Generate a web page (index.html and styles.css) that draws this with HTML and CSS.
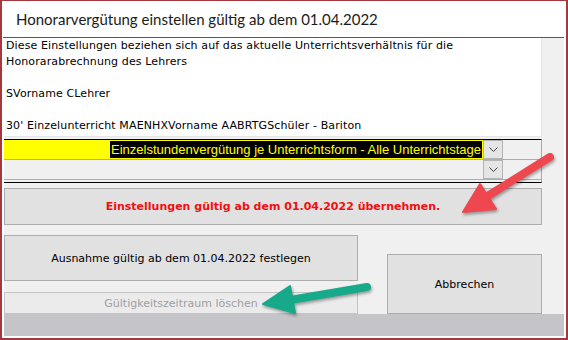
FILE: index.html
```html
<!DOCTYPE html>
<html lang="de">
<head>
  <meta charset="UTF-8">
  <link rel="stylesheet" href="styles.css">
</head>
<body>
  <div class="window">
    <div class="titlebar">Honorarvergütung einstellen gültig ab dem 01.04.2022</div>
    <div class="content">
      <div class="main">
        <div class="info">
          <div>Diese Einstellungen beziehen sich auf das aktuelle Unterrichtsverhältnis für die</div>
          <div>Honorarabrechnung des Lehrers</div>
          <div>&nbsp;</div>
          <div>SVorname CLehrer</div>
          <div>&nbsp;</div>
          <div>30' Einzelunterricht MAENHXVorname AABRTGSchüler - Bariton</div>
        </div>
        <div class="combos">
          <div class="combo-row">
            <div class="combo combo-yellow">
              <div class="combo-field"><span class="combo-value">Einzelstundenvergütung je Unterrichtsform - Alle Unterrichtstage</span></div>
              <div class="drop">
                <svg width="9" height="5" viewBox="0 0 9 5"><polyline points="0.5,0.5 4.5,4.5 8.5,0.5" fill="none" stroke="#444" stroke-width="1"/></svg>
              </div>
            </div>
          </div>
          <div class="combo-row">
            <div class="combo">
              <div class="combo-field combo-empty"></div>
              <div class="drop">
                <svg width="9" height="5" viewBox="0 0 9 5"><polyline points="0.5,0.5 4.5,4.5 8.5,0.5" fill="none" stroke="#444" stroke-width="1"/></svg>
              </div>
            </div>
          </div>
        </div>
        <button class="btn btn-apply">Einstellungen gültig ab dem 01.04.2022 übernehmen.</button>
        <div class="lower">
          <div class="lower-left">
            <button class="btn btn-exception">Ausnahme gültig ab dem 01.04.2022 festlegen</button>
            <button class="btn btn-delete" disabled>Gültigkeitszeitraum löschen</button>
          </div>
          <button class="btn btn-cancel">Abbrechen</button>
        </div>
      </div>
      <div class="side"></div>
    </div>
    <div class="statusbar"></div>

    <svg class="arrows" width="568" height="340" viewBox="0 0 568 340">
      <g class="arrow-red">
        <line x1="550" y1="157" x2="486" y2="197" stroke="#ef474f" stroke-width="8" stroke-linecap="round"/>
        <polygon points="463,212 480,184 496,209" fill="#ef474f" stroke="#ef474f" stroke-width="2" stroke-linejoin="round"/>
      </g>
      <g class="arrow-green">
        <line x1="367" y1="287" x2="290" y2="300" stroke="#16a98a" stroke-width="8" stroke-linecap="round"/>
        <polygon points="263,304 290,286 295,313" fill="#16a98a" stroke="#16a98a" stroke-width="2" stroke-linejoin="round"/>
      </g>
    </svg>
  </div>
</body>
</html>
```

FILE: styles.css
```css
body {
  margin: 0;
  padding: 0;
  background-color: white;
  font-family: "DejaVu Sans", Tahoma, sans-serif;
}

.window {
  position: relative;
  width: 568px;
  height: 340px;
  box-sizing: border-box;
  border: 2px solid #a5383c;
  border-top-width: 1px;
  padding: 0 2px 2px 2px;
  background-color: white;
  display: flex;
  flex-direction: column;
}

.titlebar {
  height: 36px;
  border-bottom: 1px solid #a5383c;
  margin-left: -1px;
  padding-left: 13px;
  display: flex;
  align-items: center;
  font-family: Lato, "Noto Sans", sans-serif;
  font-size: 15px;
  color: #1b1b1b;
}

.content {
  height: 276px;
  display: flex;
  background-color: #f0f0f0;
}

.main {
  width: 538px;
  display: flex;
  flex-direction: column;
}

.side {
  flex-grow: 1;
  background-color: #f0f0f0;
}

.info {
  height: 100px;
  box-sizing: border-box;
  background-color: white;
  border-bottom: 1px solid #e6e6e6;
  border-right: 1px solid #e2e2e2;
  padding-left: 2px;
  font-size: 11px;
  letter-spacing: 0.12px;
  line-height: 16px;
  color: black;
}

.combos {
  margin-top: 2px;
  border-top: 1px solid black;
  border-bottom: 1px solid black;
  border-right: 1px solid #a8a8a8;
  padding-bottom: 2px;
}

.combo-row {
  height: 19px;
  border-bottom: 1px solid #adadad;
}

.combo {
  width: 499px;
  height: 19px;
  display: flex;
}

.combo-field {
  flex-grow: 1;
  display: flex;
  justify-content: flex-end;
  align-items: center;
}

.combo-yellow .combo-field {
  background-color: #ffff00;
}

.combo-value {
  background-color: black;
  color: #ffff00;
  height: 17px;
  line-height: 17px;
  margin-right: 1px;
  padding: 0 1px;
  font-family: "Liberation Sans", Arial, sans-serif;
  font-size: 13px;
}

.drop {
  width: 18px;
  height: 17px;
  border: 1px solid #b4b4b4;
  background-color: #e5e5e5;
  display: flex;
  justify-content: center;
  align-items: center;
}

.btn {
  box-sizing: border-box;
  border: 1px solid #adadad;
  background-color: #e1e1e1;
  font-family: "DejaVu Sans", Tahoma, sans-serif;
  font-size: 11px;
  color: black;
  padding: 0;
}

.btn-apply {
  margin-top: 5px;
  height: 37px;
  width: 538px;
  color: #f01010;
  font-weight: bold;
}

.lower {
  margin-top: 10px;
  display: flex;
  align-items: flex-start;
}

.lower-left {
  width: 354px;
  display: flex;
  flex-direction: column;
  gap: 11px;
}

.btn-exception {
  height: 46px;
}

.btn-delete {
  height: 22px;
  background-color: #ebebeb;
  border-color: #c4c4c4;
  color: #a0a0a0;
}

.btn-cancel {
  margin-left: 29px;
  margin-top: 19px;
  width: 155px;
  height: 60px;
}

.statusbar {
  height: 22px;
  background-color: #c5c5c9;
}

.arrows {
  position: absolute;
  left: -2px;
  top: -1px;
  pointer-events: none;
}

.arrow-red {
  filter: drop-shadow(1px 2px 1.5px rgba(0, 0, 0, 0.35));
}

.arrow-green {
  filter: drop-shadow(1px 2px 1.5px rgba(0, 0, 0, 0.35));
}
```
